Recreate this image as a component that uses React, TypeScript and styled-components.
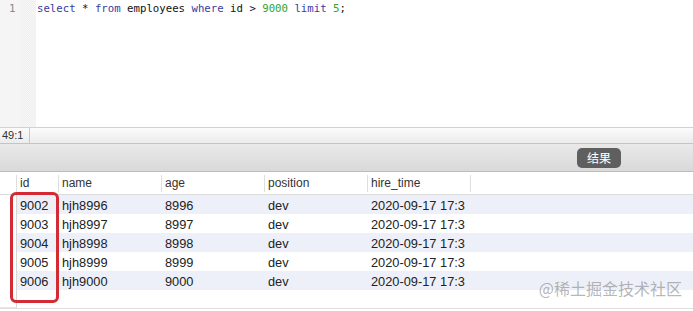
import styled, { createGlobalStyle } from 'styled-components'

const rows = [
  { id: '9002', name: 'hjh8996', age: '8996', position: 'dev', hire: '2020-09-17 17:3' },
  { id: '9003', name: 'hjh8997', age: '8997', position: 'dev', hire: '2020-09-17 17:3' },
  { id: '9004', name: 'hjh8998', age: '8998', position: 'dev', hire: '2020-09-17 17:3' },
  { id: '9005', name: 'hjh8999', age: '8999', position: 'dev', hire: '2020-09-17 17:3' },
  { id: '9006', name: 'hjh9000', age: '9000', position: 'dev', hire: '2020-09-17 17:3' },
]

const headers = ['id', 'name', 'age', 'position', 'hire_time']

const App = () => {
  return (
    <>
      <GlobalStyle />
      <Page>
        <Editor>
          <Gutter>
            <LineNumbers>1</LineNumbers>
            <FoldMargin />
          </Gutter>
          <Code>
            <Kw>select</Kw> * <Kw>from</Kw> employees <Kw>where</Kw> id &gt; <Num>9000</Num> <Kw>limit</Kw> <Num>5</Num>;
          </Code>
        </Editor>

        <StatusBar>
          <Cursor>49:1</Cursor>
        </StatusBar>

        <Toolbar>
          <ResultButton>结果</ResultButton>
        </Toolbar>

        <Table>
          <HeaderRow>
            <HeaderCell />
            {headers.map((h) => <HeaderCell key={h}>{h}</HeaderCell>)}
            <Filler />
          </HeaderRow>
          {rows.map((r, i) => (
            <Row key={r.id} $odd={i % 2 === 0}>
              <RowHead />
              <Cell>{r.id}</Cell>
              <Cell>{r.name}</Cell>
              <Cell>{r.age}</Cell>
              <Cell>{r.position}</Cell>
              <Cell>{r.hire}</Cell>
              <Filler />
            </Row>
          ))}
          <Rest>
            <RowHead />
          </Rest>
          <Highlight />
          <Watermark>@稀土掘金技术社区</Watermark>
        </Table>
      </Page>
    </>
  )
}

const GlobalStyle = createGlobalStyle`
  body {
    margin: 0;
    background: #fff;
    font-family: "Liberation Sans", Arial, sans-serif;
  }
`

const Page = styled.div`
  width: 693px;
  height: 311px;
  display: flex;
  flex-direction: column;
  overflow: hidden;
`

const Editor = styled.div`
  height: 127px;
  display: flex;
  background: #fff;
`

const Gutter = styled.div`
  display: flex;
  width: 36px;
`

const LineNumbers = styled.div`
  width: 20px;
  background: #f5f5f5;
  color: #8a8a8a;
  font-family: "DejaVu Sans Mono", monospace;
  font-size: 10.7px;
  line-height: 16px;
  padding: 1px 0 0 9px;
  box-sizing: border-box;
`

const FoldMargin = styled.div`
  width: 16px;
  background-color: #f8f8f8;
  background-image: conic-gradient(#eeeeee 25%, transparent 0 50%, #eeeeee 0 75%, transparent 0);
  background-size: 2px 2px;
`

const Code = styled.div`
  padding: 1px 0 0 1px;
  font-family: "DejaVu Sans Mono", monospace;
  font-size: 10.7px;
  line-height: 16px;
  color: #111;
  white-space: pre;
`

const Kw = styled.span`
  color: #3a3aa2;
`

const Num = styled.span`
  color: #2fa52f;
`

const StatusBar = styled.div`
  height: 15px;
  border-top: 1px solid #d2d2d2;
  background: linear-gradient(#fbfbfb, #ececec);
  display: flex;
`

const Cursor = styled.div`
  width: 30px;
  border-right: 1px solid #c8c8c8;
  font-size: 11px;
  line-height: 15px;
  color: #333;
  padding-left: 2px;
  box-sizing: border-box;
`

const Toolbar = styled.div`
  height: 27px;
  border-top: 1px solid #c4c4c4;
  border-bottom: 1px solid #bdbdbd;
  background: linear-gradient(#e9e9e9, #d9d9d9);
  display: flex;
  align-items: center;
  padding-left: 577px;
`

const ResultButton = styled.div`
  width: 44px;
  height: 20px;
  border-radius: 5px;
  background: #5f5f5f;
  color: #fff;
  font-family: "Noto Sans CJK SC", sans-serif;
  font-size: 12px;
  line-height: 20px;
  text-align: center;
`

const Table = styled.div`
  position: relative;
  flex: 1;
  display: flex;
  flex-direction: column;
  font-size: 12.8px;
  color: #222;
`

const columns = '17px 42px 103px 103px 103px 103px 1fr'

const HeaderRow = styled.div`
  display: grid;
  grid-template-columns: ${columns};
  height: 23px;
  padding: 3px 0;
  box-sizing: border-box;
  border-bottom: 1px solid #dcdcdc;
`

const HeaderCell = styled.div`
  border-right: 1px solid #dedede;
  padding-left: 3px;
  font-size: 12px;
  line-height: 17px;
  color: #333;
`

const Row = styled.div<{ $odd: boolean }>`
  display: grid;
  grid-template-columns: ${columns};
  height: 19px;
  background: ${(p) => (p.$odd ? '#edf0f9' : '#fff')};
`

const RowHead = styled.div`
  border-right: 1px solid #d6d6d6;
  border-bottom: 1px solid #e6e6e6;
  background: #fff;
`

const Cell = styled.div`
  padding: 1px 0 0 3px;
  line-height: 19px;
  white-space: nowrap;
`

const Filler = styled.div``

const Rest = styled.div`
  flex: 1;
  display: grid;
  grid-template-columns: 17px;
  border-bottom: 1px solid #dedede;
  margin-bottom: 2px;
`

const Highlight = styled.div`
  position: absolute;
  left: 10px;
  top: 20px;
  width: 43px;
  height: 105px;
  border: 3px solid #d42a33;
  border-radius: 6px;
`

const Watermark = styled.div`
  position: absolute;
  right: 11px;
  bottom: 11px;
  font-family: "Noto Sans CJK SC", sans-serif;
  font-size: 16px;
  color: rgba(120, 120, 120, 0.55);
`

export default App
